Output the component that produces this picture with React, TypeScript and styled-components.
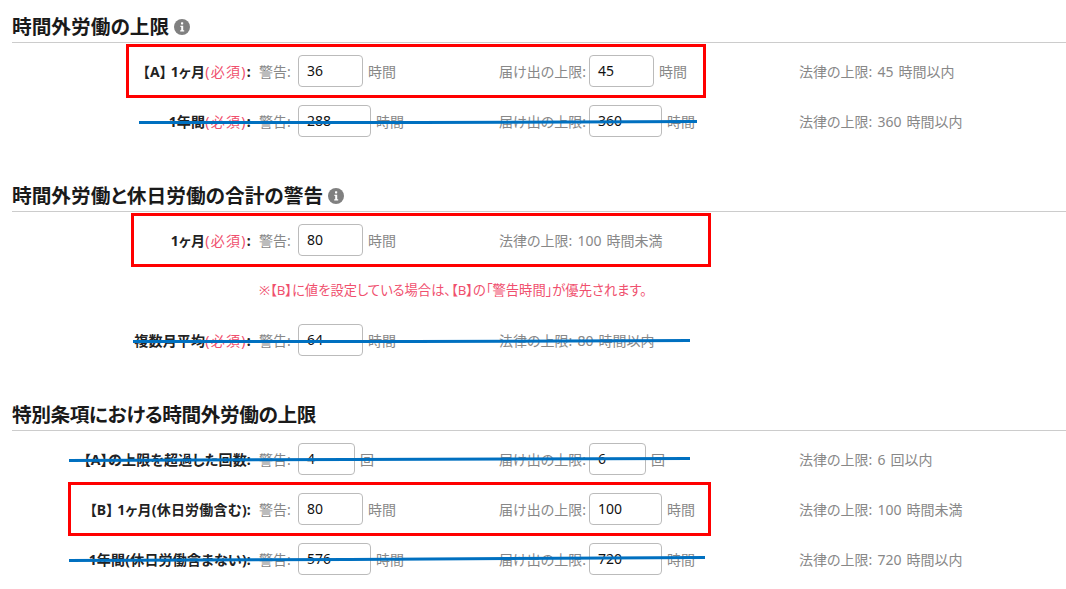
import React from "react";
import styled, { createGlobalStyle } from "styled-components";

const Global = createGlobalStyle`
  html, body { margin: 0; padding: 0; background: #fff; }
  body { font-family: "Noto Sans", "Noto Sans CJK JP", sans-serif; font-size: 14px; color: #222; overflow: hidden; font-feature-settings: "palt"; }
`;

const Page = styled.div`
  width: 1066px;
  height: 589px;
  padding-left: 12px;
  box-sizing: border-box;
  overflow: hidden;
`;

const Section = styled.section`
  margin-bottom: 23px;
`;

const Heading = styled.div`
  box-sizing: border-box;
  height: 43px;
  border-bottom: 1px solid #ccc;
  display: flex;
  align-items: flex-end;
  gap: 5px;
  padding-bottom: 4px;
`;

const HeadingText = styled.h2<{ $tight?: number }>`
  margin: 0;
  font-family: "Noto Sans CJK JP", sans-serif;
  font-size: 19.7px;
  line-height: 24px;
  font-weight: 700;
  color: #1a1a1a;
  white-space: nowrap;
  letter-spacing: ${(p) => p.$tight ?? 0}px;
`;

const InfoIcon = styled.svg`
  width: 16px;
  height: 16px;
  margin-bottom: 3px;
  flex: none;
`;

const Rows = styled.div`
  padding-top: 3px;
`;

const Row = styled.div`
  position: relative;
  display: grid;
  grid-template-columns: 239px 248px 300px 1fr;
  height: 50px;
  align-items: center;
`;

const Label = styled.div`
  text-align: right;
  font-weight: 700;
  font-size: 14px;
  letter-spacing: 0.2px;
  color: #222;
  white-space: nowrap;
`;

const Required = styled.span`
  font-weight: 400;
  color: #f0506e;
  letter-spacing: 1.3px;
`;

const Field = styled.div<{ $pad?: number }>`
  display: flex;
  align-items: center;
  padding-left: ${(p) => p.$pad ?? 0}px;
`;

const Caption = styled.span`
  color: #888;
  font-size: 14px;
  word-spacing: 1.5px;
  white-space: nowrap;
`;

const FieldCaption = styled(Caption)<{ $w: number }>`
  width: ${(p) => p.$w}px;
  flex: none;
`;

const ValueBox = styled.div<{ $w: number }>`
  box-sizing: border-box;
  width: ${(p) => p.$w}px;
  height: 32px;
  border: 1px solid #bbb;
  border-radius: 4px;
  padding-left: 8px;
  line-height: 30px;
  font-size: 14px;
  color: #111;
  background: #fff;
`;

const Unit = styled(Caption)`
  margin-left: 5px;
`;

const Note = styled.div`
  height: 50px;
  line-height: 50px;
  padding-left: 247px;
  color: #f0506e;
  font-size: 13.3px;
  white-space: nowrap;
`;

const Highlight = styled.div<{ $left: number; $width: number }>`
  position: absolute;
  box-sizing: border-box;
  top: -2px;
  left: ${(p) => p.$left}px;
  width: ${(p) => p.$width}px;
  height: 54px;
  border: 3px solid #f00;
  pointer-events: none;
`;

const Strike = styled.svg<{ $left: number; $width: number }>`
  position: absolute;
  top: 20px;
  left: ${(p) => p.$left}px;
  width: ${(p) => p.$width}px;
  height: 10px;
  overflow: visible;
  pointer-events: none;
`;

const Info = () => (
  <InfoIcon viewBox="0 0 16 16" aria-hidden="true">
    <circle cx="8" cy="8" r="8" fill="#808080" />
    <rect x="7" y="3.2" width="2.2" height="2.2" rx="0.6" fill="#fff" />
    <path d="M6.4 6.8h2.8v4.4h1v1.3H6.2v-1.3h1V8.1h-.8z" fill="#fff" />
  </InfoIcon>
);

type Mark = { left: number; width: number };
type StrikeMark = Mark & { d: string };

type RowProps = {
  label: React.ReactNode;
  warn: string;
  warnW: number;
  unit: string;
  limit?: string;
  limitW?: number;
  law: string;
  lawAtLimit?: boolean;
  box?: Mark;
  strike?: StrikeMark;
};

const FormRow = ({ label, warn, warnW, unit, limit, limitW, law, lawAtLimit, box, strike }: RowProps) => (
  <Row>
    <Label>{label}</Label>
    <Field $pad={8}>
      <FieldCaption $w={39}>警告:</FieldCaption>
      <ValueBox $w={warnW}>{warn}</ValueBox>
      <Unit>{unit}</Unit>
    </Field>
    {lawAtLimit ? (
      <Field>
        <Caption>{law}</Caption>
      </Field>
    ) : (
      <>
        <Field>
          <FieldCaption $w={90}>届け出の上限:</FieldCaption>
          <ValueBox $w={limitW ?? 65}>{limit}</ValueBox>
          <Unit>{unit}</Unit>
        </Field>
        <Field>
          <Caption>{law}</Caption>
        </Field>
      </>
    )}
    {box && <Highlight $left={box.left} $width={box.width} />}
    {strike && (
      <Strike $left={strike.left} $width={strike.width} viewBox={`0 0 ${strike.width} 10`} aria-hidden="true">
        <path d={strike.d} fill="none" stroke="#0070c0" strokeWidth="3" />
      </Strike>
    )}
  </Row>
);

const Req = () => <Required>(必須)</Required>;

export default function App() {
  return (
    <Page>
      <Global />
      <Section>
        <Heading>
          <HeadingText>時間外労働の上限</HeadingText>
          <Info />
        </Heading>
        <Rows>
          <FormRow
            label={<>【A】 1ヶ月<Req />:</>}
            warn="36"
            warnW={65}
            unit="時間"
            limit="45"
            limitW={65}
            law="法律の上限: 45 時間以内"
            box={{ left: 114, width: 580 }}
          />
          <FormRow
            label={<>1年間<Req />:</>}
            warn="288"
            warnW={73}
            unit="時間"
            limit="360"
            limitW={73}
            law="法律の上限: 360 時間以内"
            strike={{ left: 127, width: 558, d: "M0 6.5 L280 6.5 L558 5.5" }}
          />
        </Rows>
      </Section>
      <Section>
        <Heading>
          <HeadingText>時間外労働と休日労働の合計の警告</HeadingText>
          <Info />
        </Heading>
        <Rows>
          <FormRow
            label={<>1ヶ月<Req />:</>}
            warn="80"
            warnW={65}
            unit="時間"
            law="法律の上限: 100 時間未満"
            lawAtLimit
            box={{ left: 119, width: 580 }}
          />
          <Note>※【B】に値を設定している場合は、【B】の「警告時間」が優先されます。</Note>
          <FormRow
            label={<>複数月平均<Req />:</>}
            warn="64"
            warnW={65}
            unit="時間"
            law="法律の上限: 80 時間以内"
            lawAtLimit
            strike={{ left: 121, width: 557, d: "M0 6.5 L280 6.5 L557 5.5" }}
          />
        </Rows>
      </Section>
      <Section>
        <Heading>
          <HeadingText $tight={-0.45}>特別条項における時間外労働の上限</HeadingText>
        </Heading>
        <Rows>
          <FormRow
            label="【A】の上限を超過した回数:"
            warn="4"
            warnW={57}
            unit="回"
            limit="6"
            limitW={57}
            law="法律の上限: 6 回以内"
            strike={{ left: 57, width: 621, d: "M0 6.5 L280 5.5 L621 4.5" }}
          />
          <FormRow
            label="【B】 1ヶ月(休日労働含む):"
            warn="80"
            warnW={65}
            unit="時間"
            limit="100"
            limitW={73}
            law="法律の上限: 100 時間未満"
            box={{ left: 56, width: 643 }}
          />
          <FormRow
            label="1年間(休日労働含まない):"
            warn="576"
            warnW={73}
            unit="時間"
            limit="720"
            limitW={73}
            law="法律の上限: 720 時間以内"
            strike={{ left: 57, width: 636, d: "M0 6.5 L280 5.5 L636 3.5" }}
          />
        </Rows>
      </Section>
    </Page>
  );
}
